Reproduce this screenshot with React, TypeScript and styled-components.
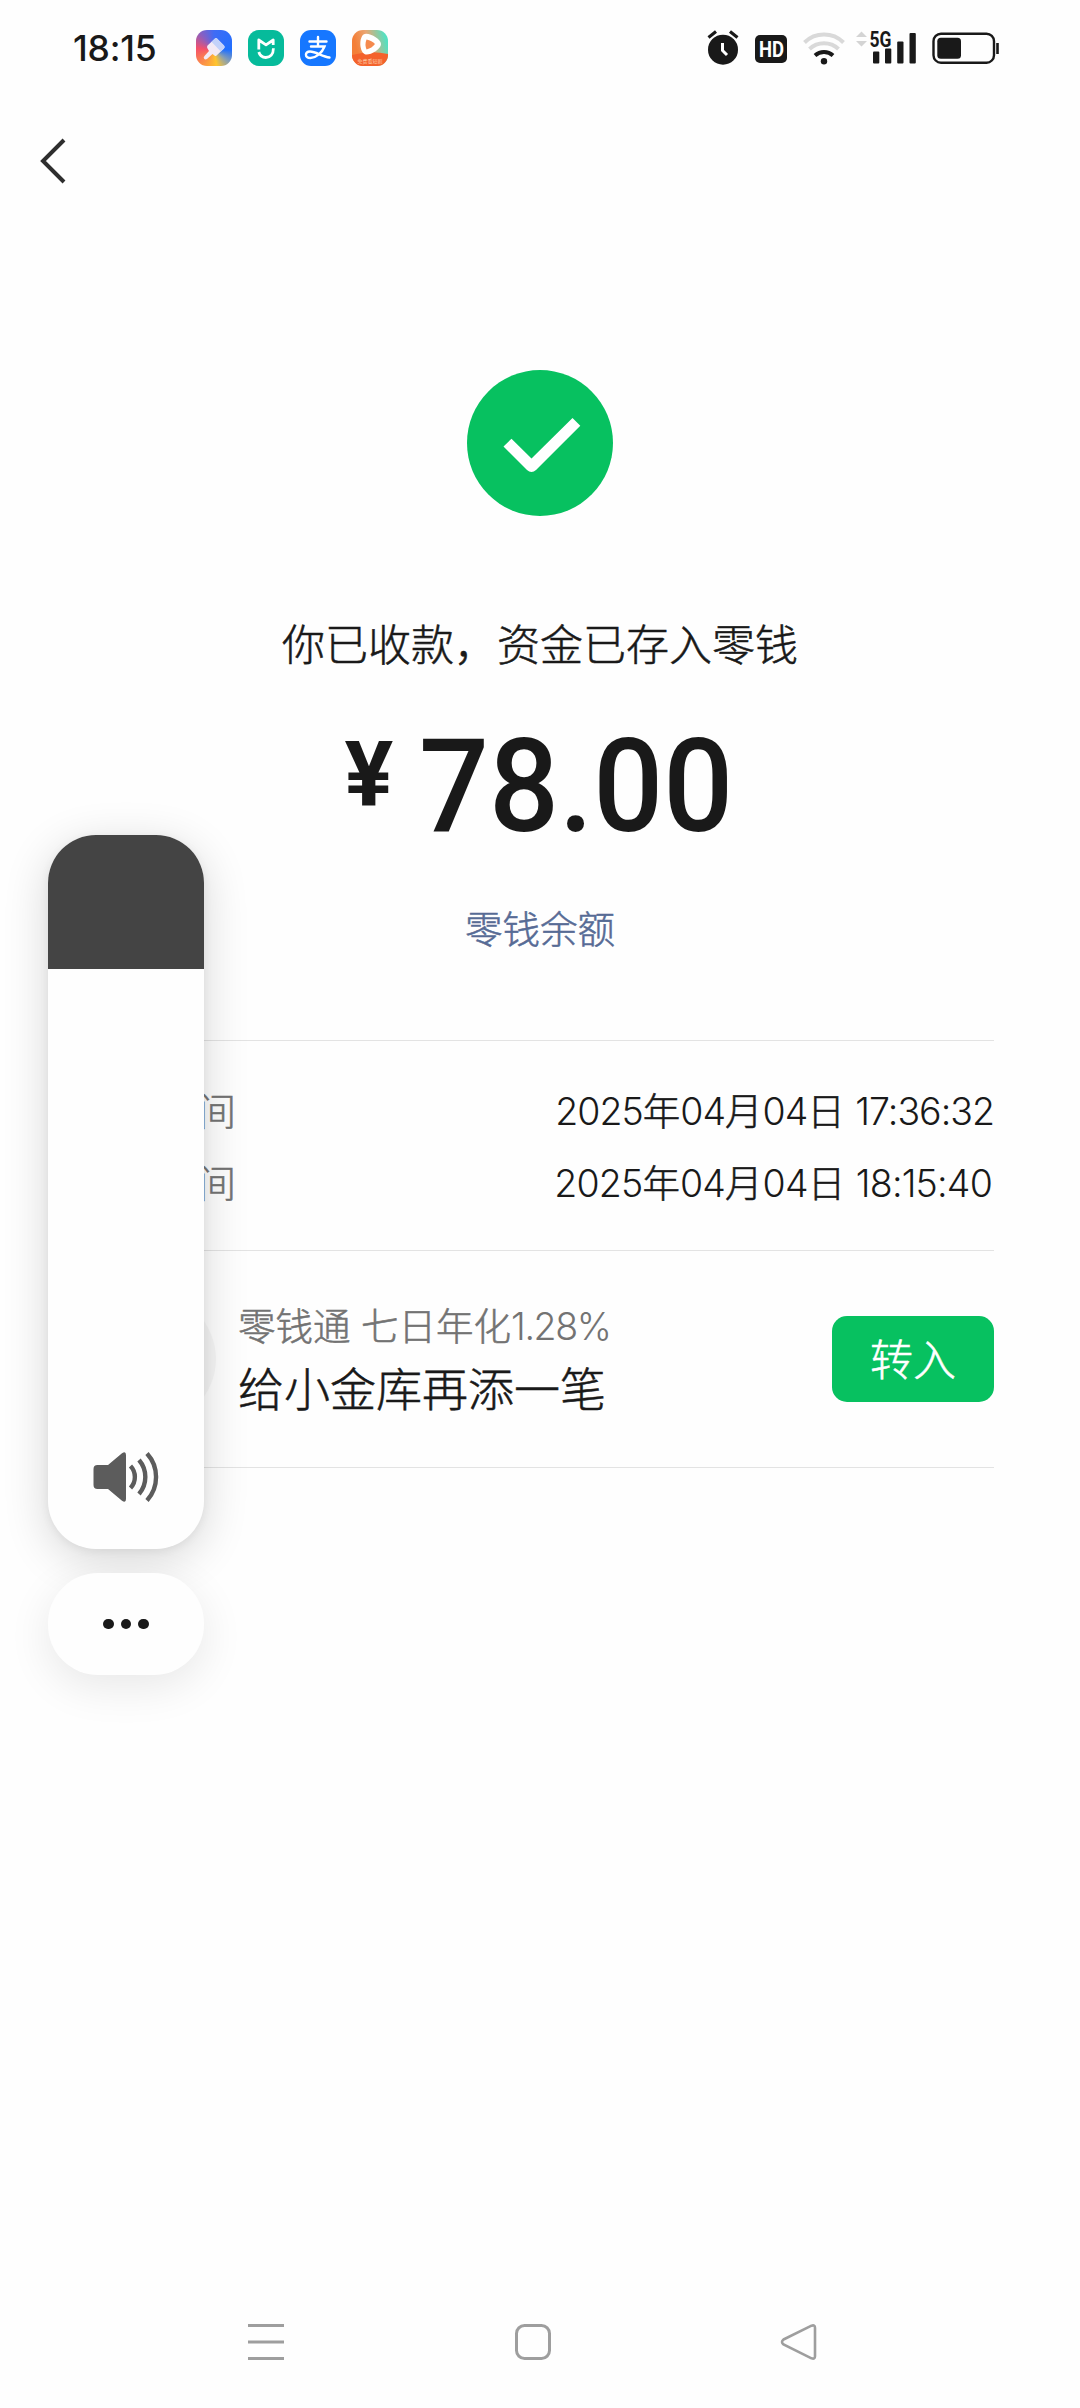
import React from "react";
import styled, { createGlobalStyle } from "styled-components";

const GlobalStyle = createGlobalStyle`
  * { box-sizing: border-box; }
  body { margin: 0; background: #fefefe; }
`;

const sans = `Inter, "Noto Sans CJK SC", sans-serif`;
const ink = "#191919";
const green = "#07c160";

const Page = styled.div`
  position: relative;
  display: flex;
  flex-direction: column;
  width: 1080px;
  height: 2408px;
  overflow: hidden;
  background: #fefefe;
  color: ${ink};
  font-family: ${sans};
  font-weight: 300;
`;

const StatusBar = styled.header`
  display: flex;
  align-items: center;
  justify-content: space-between;
  height: 96px;
  padding: 0 80px 0 73px;
`;

const StatusLeft = styled.div`
  display: flex;
  align-items: center;
`;

const Clock = styled.span`
  width: 123px;
  padding-top: 1px;
  font-size: 35.5px;
  line-height: 40px;
  font-weight: 450;
  letter-spacing: -0.2px;
`;

const AppIcons = styled.div`
  display: flex;
  gap: 16px;
`;

const AppIcon = styled.div<{ $bg: string }>`
  display: flex;
  align-items: center;
  justify-content: center;
  width: 36px;
  height: 36px;
  border-radius: 11px;
  overflow: hidden;
  background: ${(p) => p.$bg};
`;

const StatusRight = styled.div`
  display: flex;
  align-items: center;
`;

const HdBadge = styled.svg`
  margin: 2px 16px 0 16px;
`;

const NavHeader = styled.nav`
  display: flex;
  align-items: center;
  height: 130px;
  padding-left: 40px;
`;

const Hero = styled.section`
  display: flex;
  flex-direction: column;
  align-items: center;
  height: 814px;
  padding-top: 144px;
`;

const cjkStroke = "-webkit-text-stroke: 0.55px currentColor;";

const Message = styled.h1`
  margin: 99px 0 0;
  font-size: 43px;
  line-height: 60px;
  font-weight: 300;
  ${cjkStroke}
`;

const Amount = styled.div`
  display: flex;
  align-items: flex-start;
  height: 130px;
  margin-top: 47px;
  font-family: Roboto, sans-serif;
  font-weight: 500;
`;

const Currency = styled.span`
  width: 75px;
  font-size: 91px;
  line-height: 106px;
  font-weight: 700;
`;

const Figure = styled.span`
  margin-right: -13px;
  font-size: 129px;
  line-height: 130px;
  transform: scaleX(0.955);
  transform-origin: left;
`;

const BalanceLink = styled.a`
  margin-top: 48px;
  color: #576b95;
  font-size: 37.5px;
  line-height: 60px;
  ${cjkStroke}
`;

const Details = styled.section`
  margin: 0 86px;
  height: 210px;
  padding-top: 35px;
  border-top: 1px solid #e3e3e3;
`;

const DetailRow = styled.div`
  display: flex;
  justify-content: space-between;
  height: 72px;
  line-height: 72px;
  font-size: 37.5px;
  ${cjkStroke}
`;

const DetailLabel = styled.span`
  color: #737373;
`;

const DetailValue = styled.span<{ $inset?: number }>`
  margin-right: ${(p) => p.$inset ?? 0}px;
`;

const Digits = styled.span<{ $tracking: number }>`
  letter-spacing: ${(p) => p.$tracking}px;
  -webkit-text-stroke: 0;
`;

const Promo = styled.section`
  display: flex;
  align-items: center;
  height: 218px;
  margin: 0 86px;
  border-top: 1px solid #e3e3e3;
  border-bottom: 1px solid #e3e3e3;
`;

const PromoIcon = styled.div`
  width: 130px;
  height: 130px;
  border-radius: 50%;
  background: #f6f6f6;
`;

const PromoText = styled.div`
  flex: 1;
  margin-left: 22px;
  ${cjkStroke}
`;

const PromoRate = styled.div`
  color: #737373;
  font-size: 37.5px;
  line-height: 60px;
`;

const PromoTitle = styled.div`
  font-size: 46px;
  line-height: 64px;
`;

const TransferButton = styled.button`
  width: 162px;
  height: 86px;
  padding: 3px 0 0;
  border: 0;
  border-radius: 15px;
  background: ${green};
  color: #fff;
  font: 300 43px/83px ${sans};
  ${cjkStroke}
`;

const SystemNav = styled.footer`
  display: flex;
  justify-content: space-between;
  align-items: center;
  height: 132px;
  margin-top: auto;
  padding: 0 262px 0 247px;
`;

const VolumePanel = styled.aside`
  position: absolute;
  left: 48px;
  top: 835px;
  display: flex;
  flex-direction: column;
  gap: 24px;
  width: 156px;
`;

const VolumeSlider = styled.div`
  display: flex;
  flex-direction: column;
  height: 714px;
  border-radius: 48px;
  overflow: hidden;
  background: #fefefe;
  box-shadow: 0 10px 46px rgba(0, 0, 0, 0.16), 0 2px 10px rgba(0, 0, 0, 0.06);
`;

const VolumeEmpty = styled.div`
  height: 134px;
  background: #444;
`;

const VolumeFill = styled.div`
  flex: 1;
  display: flex;
  align-items: flex-end;
  justify-content: center;
  padding-bottom: 47px;
`;

const MoreButton = styled.div`
  display: flex;
  align-items: center;
  justify-content: center;
  gap: 7.2px;
  height: 102px;
  border-radius: 50px;
  background: #fefefe;
  box-shadow: 0 12px 44px rgba(0, 0, 0, 0.09);
`;

const Dot = styled.i`
  width: 10.4px;
  height: 10.4px;
  border-radius: 50%;
  background: ${ink};
`;

const Mixed = ({ text, tracking = -1 }: { text: string; tracking?: number }) => (
  <>
    {text.split(/([\d:.%]+)/).map((part, i) =>
      i % 2 ? <Digits key={i} $tracking={tracking}>{part}</Digits> : part
    )}
  </>
);

const BrushIcon = () => (
  <svg width="36" height="36" viewBox="0 0 36 36">
    <path d="M11.500 15.500L19 8.500q1-1 2 0l7 7q1.300 1.500 0 3l-7.500 7q-1 1-2 0L16.500 24 11 29q-2 1.200-3-.5-.8-1.500.5-2.500L13 21l-1.500-2.500q-1-1.500 0-3z" fill="#f3eaf5" />
    <path d="M15.500 11.700L19 8.500q1-1 2 0l7 7q1.300 1.500 0 3l-3.200 3z" fill="#c3d2fa" />
  </svg>
);

const MiHomeIcon = () => (
  <svg width="36" height="36" viewBox="0 0 36 36" fill="none" stroke="#fff" strokeWidth="2.800">
    <path d="M10.800 19.500V10l7.200 4.800L25.200 10v5" strokeLinejoin="round" />
    <path d="M10.800 22c1 3.500 3.800 5.500 7 5.500 4.500 0 7.600-3.300 7.600-9.200" />
  </svg>
);

const AlipayIcon = () => (
  <svg width="36" height="36" viewBox="0 0 36 36" fill="none" stroke="#fff" strokeWidth="2.400" strokeLinecap="round">
    <path d="M9.500 11.500h17M18 7v9M11 16.500h13.500C22 23 16 28 10.500 28c-6 0-6-6.500-.5-6.500 6 0 12 5 19.500 6" />
  </svg>
);

const VideoIcon = () => (
  <svg width="36" height="36" viewBox="0 0 36 36">
    <path d="M0 25q18-5 36-1v12H0z" fill="#f4622c" />
    <path d="M11.500 4.500c4-3 17.500 4 17.500 9.500s-11 11.500-15.500 10.500C7.500 23 6.500 8.500 11.500 4.500z" fill="#fff" />
    <path d="M14.500 9.500q5.500 1 8.500 4.500-3 4-8.500 5.500-2-5 0-10z" fill="#f58a4e" />
    <text x="18" y="33" textAnchor="middle" fontSize="5" fill="#ffe0c8" fontFamily="Noto Sans CJK SC, sans-serif">免费看短剧</text>
  </svg>
);

const AlarmIcon = () => (
  <svg width="32" height="36" viewBox="0 0 32 36">
    <circle cx="16" cy="19.700" r="15" fill={ink} />
    <path d="M1.500 7.500l7.500-6M30.500 7.500l-7.500-6" stroke={ink} strokeWidth="3.200" />
    <path d="M15.500 13v7.500l4.500 4.500" stroke="#fff" strokeWidth="3" fill="none" />
  </svg>
);

const HdIcon = () => (
  <HdBadge width="32" height="28" viewBox="0 0 32 28">
    <rect width="32" height="28" rx="5" fill={ink} />
    <text x="4" y="21.700" fontFamily="Roboto, sans-serif" fontWeight="700" fontSize="22" textLength="25" lengthAdjust="spacingAndGlyphs" fill="#fff">HD</text>
  </HdBadge>
);

const WifiIcon = () => (
  <svg width="42" height="34" viewBox="0 0 42 34" fill="none" strokeWidth="4">
    <path d="M1.500 11.500a28 28 0 0 1 39 0" stroke="#d9d9d9" />
    <path d="M6.500 18a21 21 0 0 1 29 0" stroke="#d9d9d9" />
    <path d="M12 24.500a13.500 13.500 0 0 1 18 0" stroke={ink} />
    <circle cx="21" cy="30.300" r="3.200" fill={ink} />
  </svg>
);

const SignalSvg = styled.svg`
  margin-left: 11px;
  overflow: visible;
`;

const SignalIcon = () => (
  <SignalSvg width="60" height="36" viewBox="0 0 60 36">
    <path d="M0 7l5.500-5.500L11 7zM0 11l5.500 5.500L11 11z" fill="#d4d4d4" />
    <text x="13.500" y="17" fontFamily="Roboto, sans-serif" fontWeight="700" fontSize="22" textLength="22" lengthAdjust="spacingAndGlyphs" fill={ink}>5G</text>
    <g fill={ink}>
      <rect x="17" y="21.500" width="6.300" height="12" rx="1" />
      <rect x="29" y="18.500" width="6.300" height="15" rx="1" />
      <rect x="41.200" y="11.500" width="6.300" height="22" rx="1" />
      <rect x="53.500" y="3" width="6.300" height="30.500" rx="1" />
    </g>
  </SignalSvg>
);

const BatterySvg = styled.svg`
  margin-left: 16px;
`;

const BatteryIcon = () => (
  <BatterySvg width="68" height="32" viewBox="0 0 68 32">
    <rect x="1.500" y="1.700" width="60.500" height="29" rx="7.500" fill="none" stroke={ink} strokeWidth="2.400" />
    <rect x="5.300" y="5.700" width="23.700" height="21" rx="3.500" fill={ink} />
    <path d="M65.500 11v11" stroke={ink} strokeWidth="2.600" />
  </BatterySvg>
);

const SuccessIcon = () => (
  <svg width="146" height="146" viewBox="0 0 146 146">
    <circle cx="73" cy="73" r="73" fill={green} />
    <path d="M36.500 76.500l8-7.800L64.500 88.500 105.500 48l7.800 7.800L69 100q-4.500 4-9 0z" fill="#fff" />
  </svg>
);

const SpeakerIcon = () => (
  <svg width="66" height="50" viewBox="0 0 66 50">
    <path d="M4.500 13H15L29 1.300q4-2.500 4 1.700v44q0 4.200-4 1.700L15 37H4.500Q.5 37 .5 33V17q0-4 4-4z" fill="#5c5c5c" />
    <g fill="none" stroke="#5c5c5c" strokeWidth="4.400">
      <path d="M37.500 14a16 16 0 0 1 0 22" />
      <path d="M46 8a26 26 0 0 1 0 34" />
      <path d="M54 1.500a35 35 0 0 1 0 47" />
    </g>
  </svg>
);

export default function App() {
  return (
    <Page>
      <GlobalStyle />
      <StatusBar>
        <StatusLeft>
          <Clock>18:15</Clock>
          <AppIcons>
            <AppIcon $bg="conic-gradient(from 0deg at 50% 55%, #3f6cf5, #1f6fff 90deg, #8aa0b0 130deg, #ffc52e 170deg, #fb8a4a 225deg, #f5506a 275deg, #8a5fc0 320deg, #3f6cf5)">
              <BrushIcon />
            </AppIcon>
            <AppIcon $bg="#06bb9b"><MiHomeIcon /></AppIcon>
            <AppIcon $bg="#1677ff"><AlipayIcon /></AppIcon>
            <AppIcon $bg="linear-gradient(75deg, #f47f38 20%, #eaa672 50%, #55e0c0 90%)">
              <VideoIcon />
            </AppIcon>
          </AppIcons>
        </StatusLeft>
        <StatusRight>
          <AlarmIcon />
          <HdIcon />
          <WifiIcon />
          <SignalIcon />
          <BatteryIcon />
        </StatusRight>
      </StatusBar>

      <NavHeader>
        <svg width="28" height="48" viewBox="0 0 28 48">
          <path d="M24 3L3 24 24 45" fill="none" stroke="#2e2e2e" strokeWidth="4" />
        </svg>
      </NavHeader>

      <Hero>
        <SuccessIcon />
        <Message>你已收款，资金已存入零钱</Message>
        <Amount>
          <Currency>¥</Currency>
          <Figure>78.00</Figure>
        </Amount>
        <BalanceLink>零钱余额</BalanceLink>
      </Hero>

      <Details>
        <DetailRow>
          <DetailLabel>转账时间</DetailLabel>
          <DetailValue><Mixed text="2025年04月04日 17:36:32" /></DetailValue>
        </DetailRow>
        <DetailRow>
          <DetailLabel>收款时间</DetailLabel>
          <DetailValue $inset={2}><Mixed text="2025年04月04日 18:15:40" tracking={-0.8} /></DetailValue>
        </DetailRow>
      </Details>

      <Promo>
        <PromoIcon />
        <PromoText>
          <PromoRate><Mixed text="零钱通 七日年化1.28%" tracking={-1.4} /></PromoRate>
          <PromoTitle>给小金库再添一笔</PromoTitle>
        </PromoText>
        <TransferButton>转入</TransferButton>
      </Promo>

      <SystemNav>
        <svg width="38" height="38" viewBox="0 0 38 38" stroke="#9e9e9e" strokeWidth="3">
          <path d="M1 2.500h36M1 19h36M1 35.500h36" />
        </svg>
        <svg width="38" height="38" viewBox="0 0 38 38">
          <rect x="2.500" y="2.500" width="33" height="33" rx="8" fill="none" stroke="#9e9e9e" strokeWidth="3" />
        </svg>
        <svg width="38" height="38" viewBox="0 0 38 38">
          <path d="M3.500 16.500L31.500 2.700q3.500-1.200 3.500 2v28.600q0 3.200-3.500 2L3.500 21.500q-3-2.500 0-5z" fill="none" stroke="#9e9e9e" strokeWidth="2.600" />
        </svg>
      </SystemNav>

      <VolumePanel>
        <VolumeSlider>
          <VolumeEmpty />
          <VolumeFill><SpeakerIcon /></VolumeFill>
        </VolumeSlider>
        <MoreButton><Dot /><Dot /><Dot /></MoreButton>
      </VolumePanel>
    </Page>
  );
}
